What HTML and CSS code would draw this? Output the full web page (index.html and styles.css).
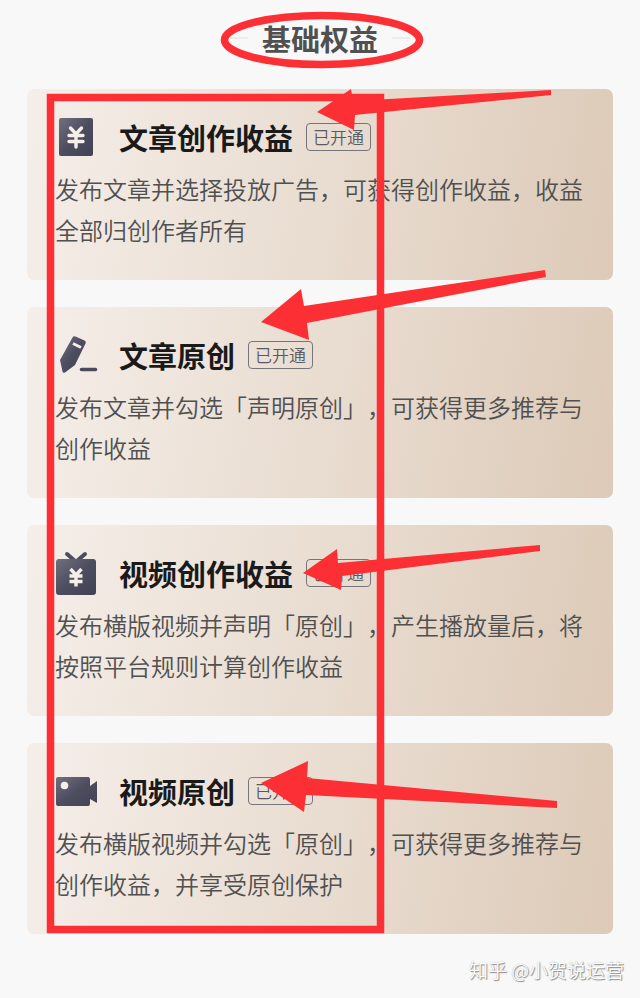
FILE: index.html
```html
<!DOCTYPE html>
<html lang="zh-CN">
<head>
<meta charset="utf-8">
<meta name="viewport" content="width=device-width, initial-scale=1">
<title>基础权益</title>
<link rel="stylesheet" href="styles.css">
</head>
<body>
<svg class="defs" aria-hidden="true">
  <defs>
    <linearGradient id="ink" x1="0" y1="0" x2="1" y2="1">
      <stop offset="0" stop-color="#70707f"/>
      <stop offset="0.5" stop-color="#4d4d60"/>
      <stop offset="1" stop-color="#424256"/>
    </linearGradient>
  </defs>
</svg>
<main class="page">
  <h1 class="heading">基础权益</h1>
  <section class="cards">
    <article class="card">
      <header class="card-head">
        <svg class="icon" viewBox="0 0 42 42" aria-hidden="true">
          <rect x="4" y="2" width="34" height="38" rx="2" fill="url(#ink)"/>
          <path d="M15.500 12l5.500 6 5.500-6M14 19.500h14M14 25.500h14M21 18v13" fill="none" stroke="#f5eee9" stroke-width="3.400" stroke-linecap="round"/>
        </svg>
        <h2 class="title">文章创作收益</h2>
        <span class="badge">已开通</span>
      </header>
      <p class="desc">发布文章并选择投放广告，可获得创作收益，收益全部归创作者所有</p>
    </article>
    <article class="card">
      <header class="card-head">
        <svg class="icon" viewBox="0 0 42 42" aria-hidden="true">
          <path d="M17.500 3.500q1-2 3-1l9 4q2 1 1 3L20 31l-10 7.500q-2 1-2.500-1L5 26z" fill="url(#ink)"/>
          <path d="M18 9.500l8 4" stroke="#f5eee9" stroke-width="3"/>
          <path d="M26.500 35.500h14" stroke="#4a4a5c" stroke-width="3.500" stroke-linecap="round"/>
        </svg>
        <h2 class="title">文章原创</h2>
        <span class="badge">已开通</span>
      </header>
      <p class="desc">发布文章并勾选「声明原创」，可获得更多推荐与创作收益</p>
    </article>
    <article class="card">
      <header class="card-head">
        <svg class="icon" viewBox="0 0 42 42" aria-hidden="true">
          <path d="M12 2l8 7M30 2l-8 7" stroke="#4d4d5e" stroke-width="4" stroke-linecap="round"/>
          <rect x="1" y="7" width="40" height="36" rx="3" fill="url(#ink)"/>
          <path d="M15.500 17l5.500 6 5.500-6M14.500 24h13M14.500 29.500h13M21 22v12.500" fill="none" stroke="#f5eee9" stroke-width="3.400"/>
        </svg>
        <h2 class="title">视频创作收益</h2>
        <span class="badge">已开通</span>
      </header>
      <p class="desc">发布横版视频并声明「原创」，产生播放量后，将按照平台规则计算创作收益</p>
    </article>
    <article class="card">
      <header class="card-head">
        <svg class="icon" viewBox="0 0 42 42" aria-hidden="true">
          <path d="M3 7h30q2 0 2 2v7l7-5v22l-7-4v5q0 2-2 2H3q-2 0-2-2V9q0-2 2-2z" fill="url(#ink)"/>
          <circle cx="9.500" cy="15.500" r="3.800" fill="#f5eee9"/>
        </svg>
        <h2 class="title">视频原创</h2>
        <span class="badge">已开通</span>
      </header>
      <p class="desc">发布横版视频并勾选「原创」，可获得更多推荐与创作收益，并享受原创保护</p>
    </article>
  </section>
  <footer class="credit">知乎 @小贺说运营</footer>
  <svg class="marks" viewBox="0 0 640 998" aria-hidden="true">
    <g fill="none" stroke="#fc3034">
      <ellipse cx="322" cy="40" rx="97.500" ry="24.500" stroke-width="7.500"/>
      <rect x="50.500" y="97.500" width="330" height="832" stroke-width="7.500"/>
    </g>
    <g fill="#fc3034">
      <path d="M317 112L351 89l2 12 198-11v5L355 115l-1 15z"/>
      <path d="M261 322l40-33 3 17 241-36 1 7-239 46 2 17z"/>
      <path d="M303 573l34-24 1 14 202-18v6L342 576l-1 14z"/>
      <path d="M261 783l47-22-1 17 250 23v7l-251-13-2 17z"/>
    </g>
  </svg>
</main>
</body>
</html>
```

FILE: styles.css
```css
* {
  box-sizing: border-box;
}

body {
  margin: 0;
  background: #f8f8f8;
  color: #505050;
  font-family: "Noto Sans CJK SC", sans-serif;
  text-spacing-trim: space-all;
}

.defs {
  position: absolute;
  width: 0;
  height: 0;
}

.page {
  position: relative;
  padding: 18px 27px 12px;
}

.heading {
  display: flex;
  align-items: center;
  justify-content: center;
  gap: 14px;
  margin: 0 0 31px;
  font-size: 29px;
  line-height: 40px;
  font-weight: 700;
  color: #505050;
}

.heading::before,
.heading::after {
  content: "";
  width: 18px;
  height: 2px;
  background: #eeece9;
}

.cards {
  display: flex;
  flex-direction: column;
  gap: 27px;
}

.card {
  padding: 27px 28px 30px;
  border-radius: 7px;
  background: linear-gradient(100deg, #f5eee9 0%, #e7dacd 58%, #ddcab8 100%);
}

.card-head {
  display: flex;
  align-items: center;
  margin-bottom: 10px;
}

.icon {
  flex: none;
  width: 42px;
  height: 42px;
  margin-right: 22px;
  overflow: visible;
}

.title {
  margin: 0 13px 0 0;
  font-size: 29px;
  line-height: 40px;
  font-weight: 700;
  color: #1a1a1a;
}

.badge {
  padding: 0 6px;
  border: 1px solid #77757a;
  border-radius: 4px;
  font-size: 17px;
  line-height: 26px;
  font-weight: 350;
  color: #5a5962;
}

.desc {
  margin: 0;
  font-size: 24px;
  line-height: 41px;
  font-weight: 350;
}

.credit {
  margin-top: 22px;
  margin-right: -11px;
  text-align: right;
  font-size: 19px;
  line-height: 28px;
  font-weight: 350;
  color: #fff;
  text-shadow: 1px 1px 1px #888, 0 0 1px #aaa;
}

.marks {
  position: absolute;
  top: 0;
  left: 0;
  width: 100%;
  pointer-events: none;
}
```
